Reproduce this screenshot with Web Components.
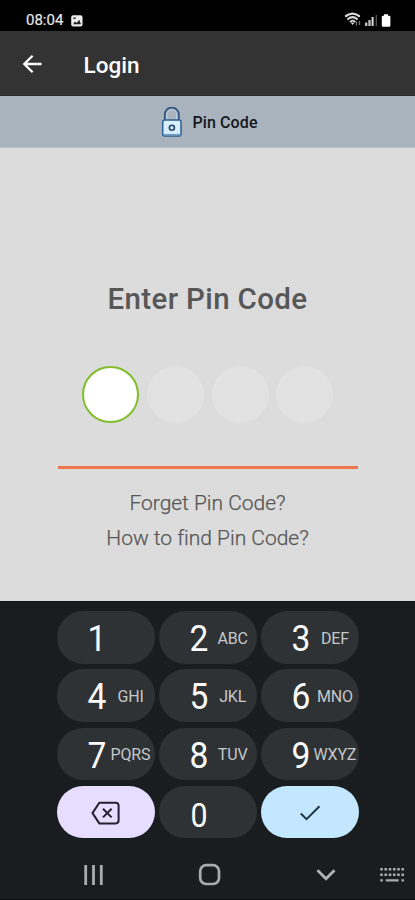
<!DOCTYPE html>
<html lang="en">
<head>
<meta charset="utf-8">
<title>Login</title>
<style>
html,body{margin:0;height:100%;background:#dcdcdc}
body{font-family:Roboto,"Liberation Sans",sans-serif;overflow:hidden}
</style>
</head>
<body>
<login-screen></login-screen>
<script>
const define = (name, html, setup) => customElements.define(name, class extends HTMLElement {
  constructor() {
    super();
    const t = document.createElement('template');
    t.innerHTML = html;
    this.attachShadow({mode: 'open'}).append(t.content.cloneNode(true));
  }
  connectedCallback() { if (setup) setup(this); }
});

define('status-bar', `
<style>
:host{display:flex;align-items:flex-start;height:31px;box-sizing:border-box;background:#000;color:#e4e4e4;padding:11px 23px 0 26px}
span{font-size:15px;line-height:19px;width:45px;white-space:nowrap;-webkit-text-stroke:.2px}
svg{display:block}
.r{margin-left:auto}
</style>
<span>08:04</span>
<svg width="12" height="12" viewBox="0 0 12 12" style="margin-top:4px"><rect x=".2" y=".2" width="11.3" height="11.4" rx="2" fill="#ececec"/><path d="M2 9.2 4 6.4 5.7 8 8.2 4.8 10 9.2Z" fill="#222"/><path d="M2.3 3.2h2.5" stroke="#222" stroke-width="1.4"/></svg>
<svg class="r" width="48" height="17" viewBox="344 11 48 17">
<g fill="none" stroke="#d8d8d8" stroke-linecap="round">
<path d="M346 16q6.600-4.700 13 0" stroke-width="2.200"/><path d="M348 19q4.600-3.800 9 0" stroke-width="2"/><path d="M350.500 21.600q2.300-2 4.300 0" stroke-width="1.800"/></g>
<path d="M350.600 22.500h4l-2 2.500Z" fill="#d8d8d8"/><path d="M356.500 21.500v4M359.500 21v4" stroke="#777" stroke-width="1.300"/>
<path d="M366.200 26v-3.500M369.500 26v-6" stroke="#bbb" stroke-width="2.400"/><path d="M372.600 26v-9" stroke="#ddd" stroke-width="2"/><path d="M376.300 26V15" stroke="#555" stroke-width="1.300"/>
<path d="M384 14.300h4v1.500h1.200a1.200 1.200 0 0 1 1.200 1.200v8.400a1.300 1.300 0 0 1-1.300 1.300h-6a1.300 1.300 0 0 1-1.300-1.300V17a1.200 1.200 0 0 1 1.200-1.200h1Z" fill="#fff"/>
</svg>`);

define('app-bar', `
<style>
:host{display:flex;align-items:center;height:65px;box-sizing:border-box;background:#333;color:#fff;padding:2px 0 0 22px;border-bottom:1px solid #292929}
svg{width:20px;height:20px;margin-right:41.500px;margin-top:-1px}
h1{margin:1px 0 0;font-size:22.500px;font-weight:500;line-height:28px}
</style>
<svg viewBox="0 0 20 20" fill="none" stroke="#fff" stroke-width="2.300"><path d="M19.500 10H2.500M10.600 1.800 2.300 10l8.300 8.200"/></svg>
<h1><slot></slot></h1>`);

define('section-tab', `
<style>
:host{display:flex;align-items:center;height:52px;box-sizing:border-box;background:#a9b3be;color:#15181c;padding:2px 0 0 161px;font-size:16px;font-weight:500;letter-spacing:.1px;border-bottom:1px solid #b8c0c8}
svg{width:22px;height:31px;margin-right:9.500px}
</style>
<svg viewBox="161 107 22 31"><path d="M164.800 120v-5.500a7 7 0 0 1 14 0v5.500" fill="none" stroke="#34557f" stroke-width="1.800"/><path d="M166.800 120v-5.300a5 5 0 0 1 10 0v5.300" fill="none" stroke="#c1d4e6" stroke-width="1"/><rect x="162.700" y="120" width="18.300" height="16" rx="2" fill="#d7eefc" stroke="#2e5d91" stroke-width="1.500"/><path d="M163.500 134.700h17" stroke="#739dc4" stroke-width="1.500"/><circle cx="171.900" cy="127.800" r="2.500" fill="#dcecf8" stroke="#25466b" stroke-width="1.600"/></svg>
<slot></slot>`);

define('pin-dot', `
<style>
:host{display:block;width:57px;height:57px;border-radius:50%;box-sizing:border-box;background:#e2e2e2}
:host([active]){background:#fff;border:2px solid #82bd2c}
</style>`);

define('pin-form', `
<style>
:host{display:flex;flex-direction:column;align-items:center;height:453px;box-sizing:border-box;background:#dcdcdc;color:#575757;padding-top:133px}
h2{margin:0;font-size:29.500px;line-height:36px;font-weight:500;letter-spacing:.35px;white-space:nowrap}
.dots{display:flex;gap:7.700px;margin:48.500px 0 43px;padding-left:.5px}
hr{width:300px;height:3px;border:0;margin:0 0 17px;background:#ee774e}
a{font-size:21px;line-height:35px;font-weight:300;white-space:nowrap;-webkit-text-stroke:.25px;letter-spacing:-.02px}
</style>
<h2>Enter Pin Code</h2>
<div class="dots"><pin-dot active></pin-dot><pin-dot></pin-dot><pin-dot></pin-dot><pin-dot></pin-dot></div>
<hr>
<a>Forget Pin Code?</a>
<a>How to find Pin Code?</a>`);

define('pad-key', `
<style>
:host{display:grid;grid-template-columns:24px 45px;justify-content:start;align-items:baseline;padding-left:28px;box-sizing:border-box;height:52.500px;border-radius:27px;background:#2e3235;color:#fafafa;text-align:center}
b{font-weight:400;font-size:36.500px;line-height:55px;transform:scaleX(.92)}
small{font-size:16px;line-height:20px;color:#c5c8ca;letter-spacing:-.15px;position:relative;left:-1px;top:-7.500px;white-space:nowrap}
:host([digit="0"]) b{font-size:33px;line-height:60px}
:host([kind]){display:flex;justify-content:center;align-items:center;padding:1px 0 0}
:host([kind=erase]){background:#e7ddff}
:host([kind=done]){background:#c3e7ff}
:host([kind]) b,:host([kind]) small{display:none}
</style>
<b></b><small></small><slot></slot>`, el => {
  el.shadowRoot.querySelector('b').textContent = el.getAttribute('digit') || '';
  el.shadowRoot.querySelector('small').textContent = el.getAttribute('letters') || '';
});

define('number-pad', `
<style>
:host{display:grid;grid-template-columns:repeat(3,97.500px);column-gap:4.700px;row-gap:5.800px;padding:10px 0 0 57px}
svg{display:block}
</style>
<pad-key digit="1"></pad-key><pad-key digit="2" letters="ABC"></pad-key><pad-key digit="3" letters="DEF"></pad-key>
<pad-key digit="4" letters="GHI"></pad-key><pad-key digit="5" letters="JKL"></pad-key><pad-key digit="6" letters="MNO"></pad-key>
<pad-key digit="7" letters="PQRS"></pad-key><pad-key digit="8" letters="TUV"></pad-key><pad-key digit="9" letters="WXYZ"></pad-key>
<pad-key kind="erase"><svg width="30" height="24" viewBox="0 0 30 24" fill="none" stroke="#25212f" stroke-width="2"><path d="M8.300 1.800h16.500a2.800 2.800 0 0 1 2.800 2.800v15a2.800 2.800 0 0 1-2.800 2.800H8.300L1.500 12.100Z" stroke-linejoin="round"/><path d="m12 7.800 8.600 8.600m0-8.600L12 16.400"/></svg></pad-key>
<pad-key digit="0"></pad-key>
<pad-key kind="done"><svg width="22" height="18" viewBox="0 0 22 18" fill="none" stroke="#203543" stroke-width="2"><path d="m1.800 9.500 5.700 5.700L20.500 2.200"/></svg></pad-key>`);

define('nav-bar', `
<style>
:host{display:flex;align-items:center;height:36px;padding-left:83px;margin-top:18.400px}
svg{display:block;flex:none}
.home{margin:0 93px 0 93px}
.keys{margin-left:43px}
</style>
<svg width="22" height="22" viewBox="0 0 22 22" stroke="#a9abad" stroke-width="2.800"><path d="M2.700 1v20M10.500 1v20M18.300 1v20"/></svg>
<svg class="home" width="24" height="24" viewBox="0 0 24 24"><rect x="2.200" y="2.200" width="18.800" height="18.800" rx="6" fill="none" stroke="#a9abad" stroke-width="2.700"/></svg>
<svg width="22" height="14" viewBox="0 0 22 14"><path d="m2.500 2.300 8.500 8.500 8.500-8.500" fill="none" stroke="#b2b3b5" stroke-width="2.800"/></svg>
<svg class="keys" width="24" height="16" viewBox="0 0 24 16" stroke="#aaa" stroke-width="2.400"><path d="M.2 2.200h24M.2 7.800h24" stroke-dasharray="2.600 1.650"/><path d="M.2 13.400h2.600M5.800 13.400h12.800M21.500 13.400h2.500"/></svg>`);

define('login-screen', `
<style>
:host{display:flex;flex-direction:column;width:415px;height:900px;overflow:hidden}
.keyboard{flex:1;background:#191d20;border-top:1px solid #111619;box-sizing:border-box;border-bottom:1px solid #090b0d}
number-pad{margin-top:-1px}
</style>
<status-bar></status-bar>
<app-bar>Login</app-bar>
<section-tab>Pin Code</section-tab>
<pin-form></pin-form>
<div class="keyboard"><number-pad></number-pad><nav-bar></nav-bar></div>`);
</script>
</body>
</html>
